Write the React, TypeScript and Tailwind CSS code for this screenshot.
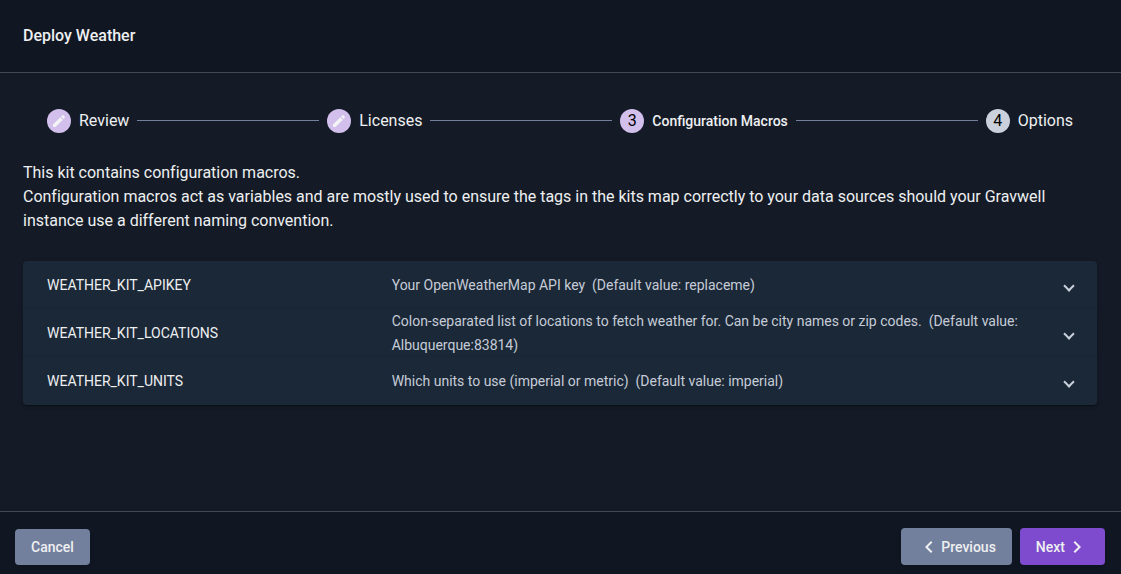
import { Fragment } from "react";
import { MdChevronLeft, MdChevronRight } from "react-icons/md";

type Step = { label: string; state: "done" | "active" | "pending" };

const steps: Step[] = [
  { label: "Review", state: "done" },
  { label: "Licenses", state: "done" },
  { label: "Configuration Macros", state: "active" },
  { label: "Options", state: "pending" },
];

const macros = [
  { name: "WEATHER_KIT_APIKEY", description: "Your OpenWeatherMap API key", value: "replaceme" },
  {
    name: "WEATHER_KIT_LOCATIONS",
    description: "Colon-separated list of locations to fetch weather for. Can be city names or zip codes.",
    value: "Albuquerque:83814",
  },
  { name: "WEATHER_KIT_UNITS", description: "Which units to use (imperial or metric)", value: "imperial" },
];

function PencilIcon() {
  return (
    <svg viewBox="0 0 24 24" fill="currentColor" className="size-4 text-[#f3f3f5]">
      <path d="M3 17.25V21h3.75L17.81 9.94l-3.75-3.75L3 17.25zM20.71 7.04a.996.996 0 0 0 0-1.41l-2.34-2.34a.996.996 0 0 0-1.41 0l-1.83 1.83 3.75 3.75 1.83-1.83z" />
    </svg>
  );
}

function StepHeader({ step, index }: { step: Step; index: number }) {
  return (
    <div className="flex shrink-0 items-center gap-2">
      <span
        className={`flex size-6 items-center justify-center rounded-full text-base leading-6 text-black ${
          step.state === "pending" ? "bg-[#cbd1dc]" : "bg-[#d2bfec]"
        }`}
      >
        {step.state === "done" ? <PencilIcon /> : <span className="-mt-px">{index + 1}</span>}
      </span>
      <span className={step.state === "active" ? "text-sm leading-6 font-medium" : "-mt-px text-base leading-6"}>
        {step.label}
      </span>
    </div>
  );
}

export default function App() {
  return (
    <div className="flex h-screen flex-col bg-[#141b26] font-['Roboto',sans-serif] text-[#eeeff1]">
      <header className="flex h-[73px] shrink-0 items-center border-b border-[#424751] bg-[#101722] px-[23px] pb-px">
        <h1 className="text-base leading-6 font-medium">Deploy Weather</h1>
      </header>

      <main className="flex-1 px-[23px] pt-9">
        <nav className="flex h-6 items-center pr-[25px] pl-6">
          {steps.map((step, index) => (
            <Fragment key={step.label}>
              {index > 0 && <div className="mx-2 -mt-px h-px flex-1 bg-[#73809d]" />}
              <StepHeader step={step} index={index} />
            </Fragment>
          ))}
        </nav>

        <p className="mt-7 text-base leading-6 tracking-[-0.008px]">
          This kit contains configuration macros.
          <br />
          Configuration macros act as variables and are mostly used to ensure the tags in the kits map correctly to your
          data sources should your Gravwell instance use a different naming convention.
        </p>

        <div className="mt-7 mr-px">
          {macros.map((macro) => (
            <div
              key={macro.name}
              className="flex h-12 items-center bg-[#1b2837] pr-6 pl-6 text-sm leading-6 shadow-[0_3px_1px_-2px_rgba(0,0,0,0.2),0_2px_2px_0_rgba(0,0,0,0.14),0_1px_5px_0_rgba(0,0,0,0.12)] first:rounded-t last:rounded-b"
            >
              <span className="w-[344.7px] shrink-0">{macro.name}</span>
              <span className="w-[640px] tracking-[-0.007px] text-[#c6ccd7]">
                {macro.description}&nbsp; (Default value: {macro.value})
              </span>
              <span className="mt-px mr-[0.5px] ml-auto size-2 rotate-45 border-r-2 border-b-2 border-[#cbd1dc]" />
            </div>
          ))}
        </div>
      </main>

      <footer className="flex h-[63px] shrink-0 items-start justify-between border-t border-[#424751] bg-[#101722] pt-4 pr-4 pl-[15px] text-sm font-medium">
        <button className="mt-px h-9 rounded bg-[#73809d] px-4 shadow-md">Cancel</button>
        <div className="flex gap-2">
          <button className="flex h-[37px] items-center rounded bg-[#73809d] px-4 shadow-md">
            <MdChevronLeft className="size-6" />
            Previous
          </button>
          <button className="flex h-[37px] items-center rounded bg-[#7f4bce] px-4 shadow-md">
            Next
            <MdChevronRight className="size-6" />
          </button>
        </div>
      </footer>
    </div>
  );
}
